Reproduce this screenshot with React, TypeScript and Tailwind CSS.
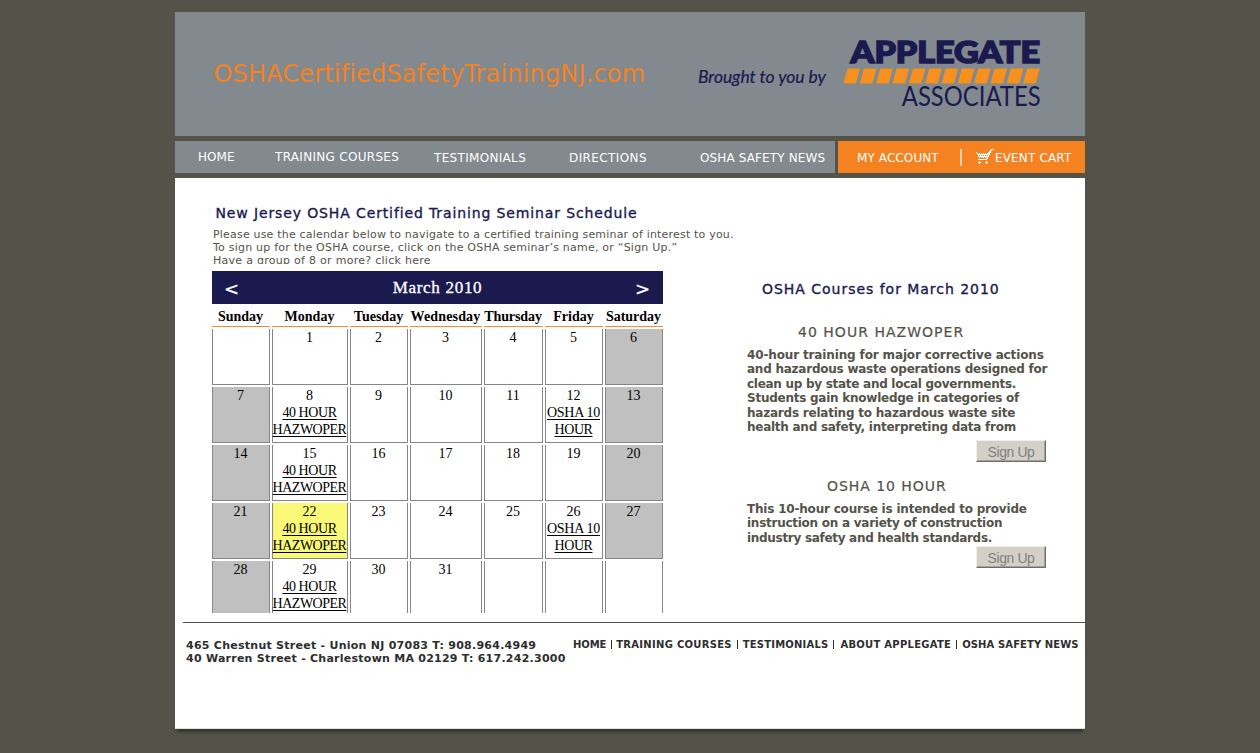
import React from 'react';

type Day = { n?: number; event?: string[]; tone?: 'grey' | 'yellow' };

const HAZ = ['40 HOUR', 'HAZWOPER'];
const OSHA = ['OSHA 10', 'HOUR'];

const weeks: Day[][] = [
  [{}, { n: 1 }, { n: 2 }, { n: 3 }, { n: 4 }, { n: 5 }, { n: 6, tone: 'grey' }],
  [{ n: 7, tone: 'grey' }, { n: 8, event: HAZ }, { n: 9 }, { n: 10 }, { n: 11 }, { n: 12, event: OSHA }, { n: 13, tone: 'grey' }],
  [{ n: 14, tone: 'grey' }, { n: 15, event: HAZ }, { n: 16 }, { n: 17 }, { n: 18 }, { n: 19 }, { n: 20, tone: 'grey' }],
  [{ n: 21, tone: 'grey' }, { n: 22, event: HAZ, tone: 'yellow' }, { n: 23 }, { n: 24 }, { n: 25 }, { n: 26, event: OSHA }, { n: 27, tone: 'grey' }],
  [{ n: 28, tone: 'grey' }, { n: 29, event: HAZ }, { n: 30 }, { n: 31 }, {}, {}, {}],
];

const dayNames: [string, string][] = [
  ['Sunday', ''],
  ['Monday', ''],
  ['Tuesday', ''],
  ['Wednesday', 'tracking-[0.15px]'],
  ['Thursday', 'tracking-[-0.1px]'],
  ['Friday', ''],
  ['Saturday', ''],
];

const courses = [
  {
    title: '40 HOUR HAZWOPER',
    titleClass: 'pl-[51px] tracking-[1.02px]',
    lines: [
      ['40-hour training for major corrective actions', 'tracking-[-0.14px]'],
      ['and hazardous waste operations designed for', 'tracking-[-0.24px]'],
      ['clean up by state and local governments.', 'tracking-[-0.28px]'],
      ['Students gain knowledge in categories of', 'tracking-[-0.25px]'],
      ['hazards relating to hazardous waste site', 'tracking-[-0.22px]'],
      ['health and safety, interpreting data from', 'tracking-[-0.26px]'],
    ],
    linesClass: 'mt-[7px] h-[92px]',
    cardClass: 'mt-[25px]',
  },
  {
    title: 'OSHA 10 HOUR',
    titleClass: 'pl-[80px] tracking-[0.95px]',
    lines: [
      ['This 10-hour course is intended to provide', 'tracking-[-0.2px]'],
      ['instruction on a variety of construction', 'tracking-[-0.26px]'],
      ['industry safety and health standards.', 'tracking-[-0.3px]'],
    ],
    linesClass: 'mt-[7px] h-[44px]',
    cardClass: 'mt-[15px]',
  },
];

const verdana = "font-['DejaVu_Sans',Verdana,sans-serif]";

function Logo() {
  return (
    <svg width="210" height="80" viewBox="0 0 210 80" className="mt-[27px] ml-[16px] block overflow-visible">
      <text x="7.5" y="24.4" textLength="189.5" lengthAdjust="spacingAndGlyphs" fontFamily="Lato, sans-serif" fontWeight="900" fontSize="30" fill="#1a1a4f" stroke="#1a1a4f" strokeWidth="1.6">
        APPLEGATE
      </text>
      {Array.from({ length: 12 }, (_, i) => (
        <path key={i} d="M4.6 29.4H17.2L13 44.6H0.4Z" transform={`translate(${i * 16.33} 0)`} fill="#f6901e" />
      ))}
      <text x="58.8" y="66.8" textLength="138.8" lengthAdjust="spacingAndGlyphs" fontFamily="Lato, sans-serif" fontSize="26" fill="#1a1a4f">
        ASSOCIATES
      </text>
    </svg>
  );
}

function CartIcon() {
  return (
    <svg width="19" height="16" viewBox="0 0 19 16" className="block" shapeRendering="crispEdges">
      <g fill="#fff">
        <path d="M0 3h2v1h11v-1h1v-1h1v-1h1v-1h3v1h-2v1h-1v2h-1v2h-1v2h-1v2h-1v1h-9v-1h8v-1h-7v-1h-1v-2h-1v-2h-1v-1h-1z" />
        <path d="M3 13h3v1h-3zM4 12h1v3h-1zM10 13h3v1h-3zM11 12h1v3h-1z" />
      </g>
      <g fill="#f58220">
        {[3, 5, 7, 9, 11].map((x) => (
          <path key={x} d={`M${x} 4h1v1h-1z`} />
        ))}
        {[4, 6, 8, 10, 12].map((x) => (
          <path key={x} d={`M${x} 6h1v1h-1z`} />
        ))}
        {[5, 7, 9, 11].map((x) => (
          <path key={x} d={`M${x} 8h1v1h-1z`} />
        ))}
      </g>
    </svg>
  );
}

function Cell({ day, last }: { day: Day; last: boolean }) {
  const bg = day.tone === 'grey' ? 'bg-[#c0c0c0]' : day.tone === 'yellow' ? 'bg-[#f9f977]' : 'bg-white';
  return (
    <div className={`${bg} ${last ? 'h-[52px]' : 'h-14 border-b'} border-x border-[#868686] pr-px text-center text-[14px] leading-[17px]`}>
      {day.n && <div>{day.n}</div>}
      {day.event && (
        <a className="flex flex-col items-center whitespace-nowrap">
          {day.event.map((line) => (
            <span
              key={line}
              className={`h-[17px] underline decoration-1 underline-offset-2 [text-decoration-skip-ink:none] ${
                line === 'HAZWOPER' ? 'tracking-[-0.5px]' : line === 'OSHA 10' ? 'tracking-[-0.27px]' : 'tracking-[-0.42px]'
              }`}
            >
              {line}
            </span>
          ))}
        </a>
      )}
    </div>
  );
}

function Calendar() {
  return (
    <div className="w-[451px] font-['Liberation_Serif','Times_New_Roman',serif] text-black">
      <div className="flex h-[33px] items-start justify-between bg-[#1a1a4f] px-3 text-white">
        <span className={`${verdana} mt-[6px] text-[18px] leading-6 [-webkit-text-stroke:0.3px_white]`}>&lt;</span>
        <span className="mt-[7px] text-[17px] leading-5 tracking-[0.7px] [-webkit-text-stroke:0.3px_white]">March 2010</span>
        <span className={`${verdana} mt-[6px] mr-px -ml-px text-[18px] leading-6 [-webkit-text-stroke:0.3px_white]`}>&gt;</span>
      </div>
      <div className="grid grid-cols-[58px_76px_58px_72px_59px_58px_58px] gap-x-[2px]">
        {dayNames.map(([name, cls]) => (
          <div key={name} className={`mb-[2px] h-[23px] border-b border-[#f0912f] pt-1 pr-px text-center text-[14px] leading-[17px] font-bold whitespace-nowrap ${cls}`}>
            {name}
          </div>
        ))}
      </div>
      <div className="grid grid-cols-[58px_76px_58px_72px_59px_58px_58px] gap-[2px]">
        {weeks.map((week, w) => week.map((day, d) => <Cell key={`${w}-${d}`} day={day} last={w === weeks.length - 1} />))}
      </div>
    </div>
  );
}

function Bar() {
  return <span className="mx-[5px] h-[9px] w-px bg-[#2e2e2e]" />;
}

export default function App() {
  return (
    <div className={`h-[753px] overflow-hidden bg-[#54534a] pt-3 ${verdana}`}>
      <div className="mx-auto w-[910px]">
        <header className="flex h-[124px] bg-[#82898f]">
          <h1 className="mt-[47px] ml-[38.5px] w-[484.5px] text-[24px] leading-[30px] tracking-[0.17px] whitespace-nowrap text-[#f58220]">
            OSHACertifiedSafetyTrainingNJ.com
          </h1>
          <div className="mt-[53px] w-[129px] font-['Lato',sans-serif] text-[17.5px] leading-6 tracking-[-0.07px] whitespace-nowrap text-[#1a1a4f] italic [-webkit-text-stroke:0.2px_#1a1a4f]">
            Brought to you by
          </div>
          <Logo />
        </header>

        <nav className="mt-[5px] flex h-8 gap-[3px] text-[12px] leading-4 whitespace-nowrap text-white">
          <div className="flex w-[660px] bg-[#82898f] pt-2">
            <a className="ml-[23px] w-[77px] tracking-[0.05px]">HOME</a>
            <a className="w-[159px] tracking-[0.3px]">TRAINING COURSES</a>
            <a className="mt-px w-[135px] tracking-[0.32px]">TESTIMONIALS</a>
            <a className="mt-px w-[131px] tracking-[0.4px]">DIRECTIONS</a>
            <a className="mt-px tracking-[0.13px]">OSHA SAFETY NEWS</a>
          </div>
          <div className="flex w-[247px] bg-[#f58220] pt-2">
            <a className="mt-px ml-[19px] w-[103px] tracking-[0.1px]">MY ACCOUNT</a>
            <span className="h-[17px] w-[2px] bg-[#fbd0a8]" />
            <a className="ml-[13px] flex">
              <CartIcon />
              <span className="mt-px ml-px tracking-[0.16px]">EVENT CART</span>
            </a>
          </div>
        </nav>

        <main className="mt-[5px] h-[551px] border-b border-[#dfe3e0] bg-white shadow-[0_5px_3px_-2px_#33332d]">
          <div className="flex h-[435px]">
            <section className="ml-[37px] w-[535px]">
              <h2 className="mt-[26px] pl-[3.5px] text-[14px] leading-[18px] tracking-[0.87px] whitespace-nowrap text-[#1a1a4f] [-webkit-text-stroke:0.35px_#1a1a4f]">
                New Jersey OSHA Certified Training Seminar Schedule
              </h2>
              <div className="mt-[6px] mb-[7px] h-9 overflow-hidden pl-px text-[11px] leading-[13px] whitespace-nowrap text-[#54534a]">
                <p className="tracking-[0.19px]">Please use the calendar below to navigate to a certified training seminar of interest to you.</p>
                <p className="tracking-[0.22px]">To sign up for the OSHA course, click on the OSHA seminar’s name, or “Sign Up.”</p>
                <p className="tracking-[0.28px]">Have a group of 8 or more? click here</p>
              </div>
              <Calendar />
            </section>

            <section className="w-[302px] pt-[102px] text-[#54534a]">
              <h2 className="pl-[15px] text-[14px] leading-[18px] tracking-[0.97px] whitespace-nowrap text-[#1a1a4f] [-webkit-text-stroke:0.35px_#1a1a4f]">
                OSHA Courses for March 2010
              </h2>
              {courses.map((c) => (
                <article key={c.title} className={c.cardClass}>
                  <h3 className={`text-[14px] leading-[18px] whitespace-nowrap [-webkit-text-stroke:0.2px_#54534a] ${c.titleClass}`}>{c.title}</h3>
                  <div className={`text-[12px] leading-[14.4px] font-bold whitespace-nowrap ${c.linesClass}`}>
                    {c.lines.map(([line, cls]) => (
                      <p key={line} className={cls}>
                        {line}
                      </p>
                    ))}
                  </div>
                  <button className="ml-[229px] block h-[22px] w-[70px] border border-t-[#f1efe9] border-r-[#6e6c66] border-b-[#6e6c66] border-l-[#f1efe9] bg-[#d4d0c8] pt-px text-center font-['Liberation_Sans',Arial,sans-serif] text-[14px] leading-[18px] tracking-[-0.4px] text-[#808080] shadow-[inset_-1px_-1px_0_#a5a29b]">
                    Sign Up
                  </button>
                </article>
              ))}
            </section>
          </div>

          <footer className="mt-[9px] ml-2 flex border-t border-[#54534a] text-[#2e2e2e]">
            <address className="mt-[16px] ml-[3px] w-[387px] text-[11px] leading-[13px] font-bold whitespace-nowrap not-italic">
              <div className="tracking-[0.26px]">465 Chestnut Street - Union NJ 07083 T: 908.964.4949</div>
              <div className="tracking-[0.25px]">40 Warren Street - Charlestown MA 02129 T: 617.242.3000</div>
            </address>
            <div className="mt-[15px] flex h-[13px] items-center text-[10px] leading-[13px] font-bold whitespace-nowrap">
              <a className="tracking-[-0.1px]">HOME</a>
              <Bar />
              <a className="-ml-px tracking-[0.28px]">TRAINING COURSES</a>
              <Bar />
              <a className="tracking-[0.2px]">TESTIMONIALS</a>
              <Bar />
              <a className="ml-px tracking-[0.27px]">ABOUT APPLEGATE</a>
              <Bar />
              <a className="tracking-[0.1px]">OSHA SAFETY NEWS</a>
            </div>
          </footer>
        </main>
      </div>
    </div>
  );
}
